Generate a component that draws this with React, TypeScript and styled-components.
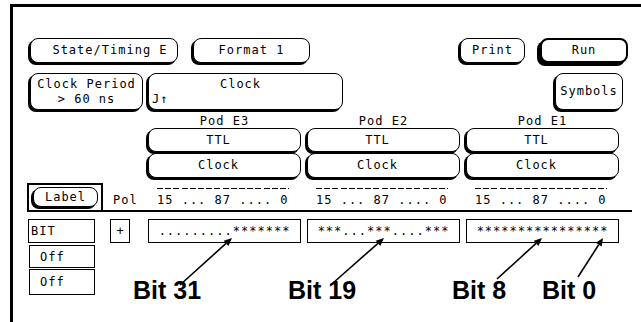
import React from "react";
import styled, { createGlobalStyle } from "styled-components";

const mono = `"DejaVu Sans Mono", "Liberation Mono", monospace`;

const GlobalStyle = createGlobalStyle`
  html, body {
    margin: 0;
    padding: 0;
    background: #fff;
  }
  body {
    font-family: ${mono};
    color: #000;
  }
`;

const Screen = styled.div`
  position: relative;
  width: 641px;
  height: 322px;
  overflow: hidden;
  box-sizing: border-box;
  padding: 4px 0 0 10px;
  background: #fff;
  font-family: ${mono};
  font-size: 12px;
  letter-spacing: 1px;
  color: #000;
`;

const Frame = styled.div`
  box-sizing: border-box;
  height: 100%;
  border-top: 3px solid #000;
  border-left: 3px solid #000;
`;

const Row = styled.div<{ $top: number; $left: number; $h: number }>`
  display: flex;
  align-items: stretch;
  margin-top: ${(p) => p.$top}px;
  margin-left: ${(p) => p.$left}px;
  height: ${(p) => p.$h}px;
`;

// rounded softkey with the heavy left/bottom edge of the analyzer screen
const Key = styled.div<{
  $w?: number;
  $h?: number;
  $ml?: number;
  $heavy?: boolean;
  $pl?: number;
  $pr?: number;
}>`
  box-sizing: border-box;
  width: ${(p) => (p.$w ? `${p.$w}px` : "auto")};
  height: ${(p) => (p.$h ? `${p.$h}px` : "auto")};
  margin-left: ${(p) => p.$ml ?? 0}px;
  border: ${(p) => (p.$heavy ? 2 : 1)}px solid #000;
  border-radius: 8px;
  box-shadow: ${(p) => (p.$heavy ? "-3px 3px 0 #000" : "-2px 2px 0 #000")};
  background: #fff;
  display: flex;
  flex-direction: column;
  align-items: center;
  justify-content: center;
  padding: 0 ${(p) => p.$pr ?? 0}px 0 ${(p) => p.$pl ?? 0}px;
  line-height: 15px;
  white-space: pre;
`;

const KeyLine = styled.div<{ $align?: "left" | "center"; $pad?: number }>`
  align-self: stretch;
  text-align: ${(p) => p.$align ?? "center"};
  padding: 0 ${(p) => (p.$align === "left" ? 0 : p.$pad ?? 0)}px 0
    ${(p) => (p.$align === "left" ? p.$pad ?? 0 : 0)}px;
`;

const PodGrid = styled.div<{ $top: number; $h: number }>`
  display: grid;
  grid-template-columns: repeat(3, 153px);
  column-gap: 6px;
  margin-top: ${(p) => p.$top}px;
  margin-left: 135px;
  height: ${(p) => p.$h}px;
`;

const PodName = styled.div`
  text-align: center;
  padding-top: 4px;
  line-height: 14px;
`;

const FieldHeader = styled.div`
  display: flex;
  width: 605px;
  height: 27px;
  margin: 5px 0 0 14px;
  border-bottom: 2px solid #000;
`;

const LabelBox = styled.div`
  box-sizing: border-box;
  width: 76px;
  border: 2px solid #000;
  border-bottom: none;
  padding: 2px 0 0 4px;
`;

const Pol = styled.div`
  width: 35px;
  margin-left: 10px;
  align-self: flex-end;
  padding-bottom: 3px;
  line-height: 14px;
`;

const RangeGrid = styled.div`
  display: grid;
  grid-template-columns: repeat(3, 153px);
  column-gap: 6px;
`;

const RangeCell = styled.div`
  display: flex;
  flex-direction: column;
  justify-content: flex-end;
  padding: 0 0 3px 9px;
`;

const Dashes = styled.div`
  width: 132px;
  height: 1px;
  margin-bottom: 4px;
  background: repeating-linear-gradient(
    to right,
    #000 0 6px,
    transparent 6px 8.2px
  );
`;

const RangeText = styled.div`
  line-height: 14px;
  white-space: pre;
`;

const Lower = styled.div`
  display: flex;
  margin: 7px 0 0 15px;
`;

const Side = styled.div`
  display: flex;
  flex-direction: column;
  width: 67px;
`;

const Cell = styled.div<{ $h: number; $mt?: number; $ml?: number; $indent: number }>`
  box-sizing: border-box;
  height: ${(p) => p.$h}px;
  margin-top: ${(p) => p.$mt ?? 0}px;
  margin-left: ${(p) => p.$ml ?? 0}px;
  border: 1px solid #000;
  padding-left: ${(p) => p.$indent}px;
  display: flex;
  align-items: center;
  line-height: 14px;
`;

const Main = styled.div`
  display: flex;
  flex-direction: column;
  margin-left: 15px;
`;

const PatternRow = styled.div`
  display: flex;
  height: 24px;
`;

const PlusBox = styled.div`
  box-sizing: border-box;
  width: 20px;
  border: 1px solid #000;
  display: flex;
  align-items: center;
  justify-content: center;
  letter-spacing: 0;
`;

const PatternGrid = styled.div`
  display: grid;
  grid-template-columns: repeat(3, 153px);
  column-gap: 6px;
  margin-left: 18px;
`;

const PatternBox = styled.div`
  box-sizing: border-box;
  border: 1px solid #000;
  display: flex;
  align-items: center;
  justify-content: center;
  white-space: pre;
  line-height: 14px;
`;

const Star = styled.span`
  vertical-align: -2px;
`;

const Callouts = styled.div`
  display: flex;
  margin: 35px 0 0 23px;
`;

const Callout = styled.div<{ $w?: number }>`
  width: ${(p) => (p.$w ? `${p.$w}px` : "auto")};
  flex: none;
  font-family: "Liberation Sans", Arial, sans-serif;
  font-weight: bold;
  font-size: 25px;
  line-height: 25px;
  letter-spacing: 0;
`;

const Overlay = styled.svg`
  position: absolute;
  left: 0;
  top: 0;
  pointer-events: none;
`;

const Pattern: React.FC<{ bits: string }> = ({ bits }) => (
  <PatternBox>
    {bits.split("").map((c, i) => (c === "*" ? <Star key={i}>*</Star> : c))}
  </PatternBox>
);

interface ArrowProps {
  x1: number;
  y1: number;
  x2: number;
  y2: number;
}

const Arrow: React.FC<ArrowProps> = ({ x1, y1, x2, y2 }) => {
  const dx = x2 - x1;
  const dy = y2 - y1;
  const len = Math.hypot(dx, dy);
  const ux = dx / len;
  const uy = dy / len;
  const bx = x2 - ux * 8;
  const by = y2 - uy * 8;
  const nx = -uy * 3.5;
  const ny = ux * 3.5;
  return (
    <g>
      <line x1={x1} y1={y1} x2={bx} y2={by} stroke="#000" strokeWidth={1.6} />
      <polygon
        points={`${x2},${y2} ${bx + nx},${by + ny} ${bx - nx},${by - ny}`}
        fill="#000"
      />
    </g>
  );
};

const pods = ["Pod E3", "Pod E2", "Pod E1"];
const patterns = [".........*******", "***...***....***", "****************"];

const arrows: ArrowProps[] = [
  { x1: 180, y1: 285, x2: 232, y2: 238 },
  { x1: 333, y1: 283, x2: 384, y2: 238 },
  { x1: 497, y1: 279, x2: 542, y2: 238 },
  { x1: 578, y1: 277, x2: 603, y2: 238 },
];

export default function App() {
  return (
    <>
      <GlobalStyle />
      <Screen>
        <Frame>
          <Row $top={31} $left={17} $h={25}>
            <Key $w={148} $pl={12}>State/Timing E</Key>
            <Key $w={117} $ml={15}>Format 1</Key>
            <Key $w={65} $ml={150}>Print</Key>
            <Key $w={88} $ml={15} $heavy>
              Run
            </Key>
          </Row>

          <Row $top={10} $left={17} $h={37}>
            <Key $w={113}>
              <KeyLine>Clock Period</KeyLine>
              <KeyLine>&gt; 60 ns</KeyLine>
            </Key>
            <Key $w={195} $ml={5}>
              <KeyLine $pad={10}>Clock</KeyLine>
              <KeyLine $align="left" $pad={3}>
                J↑
              </KeyLine>
            </Key>
            <Key $w={68} $ml={212}>Symbols</Key>
          </Row>

          <PodGrid $top={0} $h={18}>
            {pods.map((p) => (
              <PodName key={p}>{p}</PodName>
            ))}
          </PodGrid>
          <PodGrid $top={0} $h={24}>
            {pods.map((p) => (
              <Key key={p} $pr={12}>TTL</Key>
            ))}
          </PodGrid>
          <PodGrid $top={1} $h={25}>
            {pods.map((p) => (
              <Key key={p} $pr={12}>Clock</Key>
            ))}
          </PodGrid>

          <FieldHeader>
            <LabelBox>
              <Key $w={65} $h={20}>Label</Key>
            </LabelBox>
            <Pol>Pol</Pol>
            <RangeGrid>
              {pods.map((p) => (
                <RangeCell key={p}>
                  <Dashes />
                  <RangeText>15 ... 87 .... 0</RangeText>
                </RangeCell>
              ))}
            </RangeGrid>
          </FieldHeader>

          <Lower>
            <Side>
              <Cell $h={24} $indent={2}>BIT</Cell>
              <Cell $h={23} $mt={2} $ml={1} $indent={10}>Off</Cell>
              <Cell $h={26} $mt={1} $ml={1} $indent={10}>Off</Cell>
            </Side>
            <Main>
              <PatternRow>
                <PlusBox>+</PlusBox>
                <PatternGrid>
                  {patterns.map((b) => (
                    <Pattern key={b} bits={b} />
                  ))}
                </PatternGrid>
              </PatternRow>
              <Callouts>
                <Callout $w={155}>Bit 31</Callout>
                <Callout $w={164}>Bit 19</Callout>
                <Callout $w={90}>Bit 8</Callout>
                <Callout>Bit 0</Callout>
              </Callouts>
            </Main>
          </Lower>
        </Frame>

        <Overlay width={641} height={322} viewBox="0 0 641 322">
          {arrows.map((a, i) => (
            <Arrow key={i} {...a} />
          ))}
        </Overlay>
      </Screen>
    </>
  );
}
